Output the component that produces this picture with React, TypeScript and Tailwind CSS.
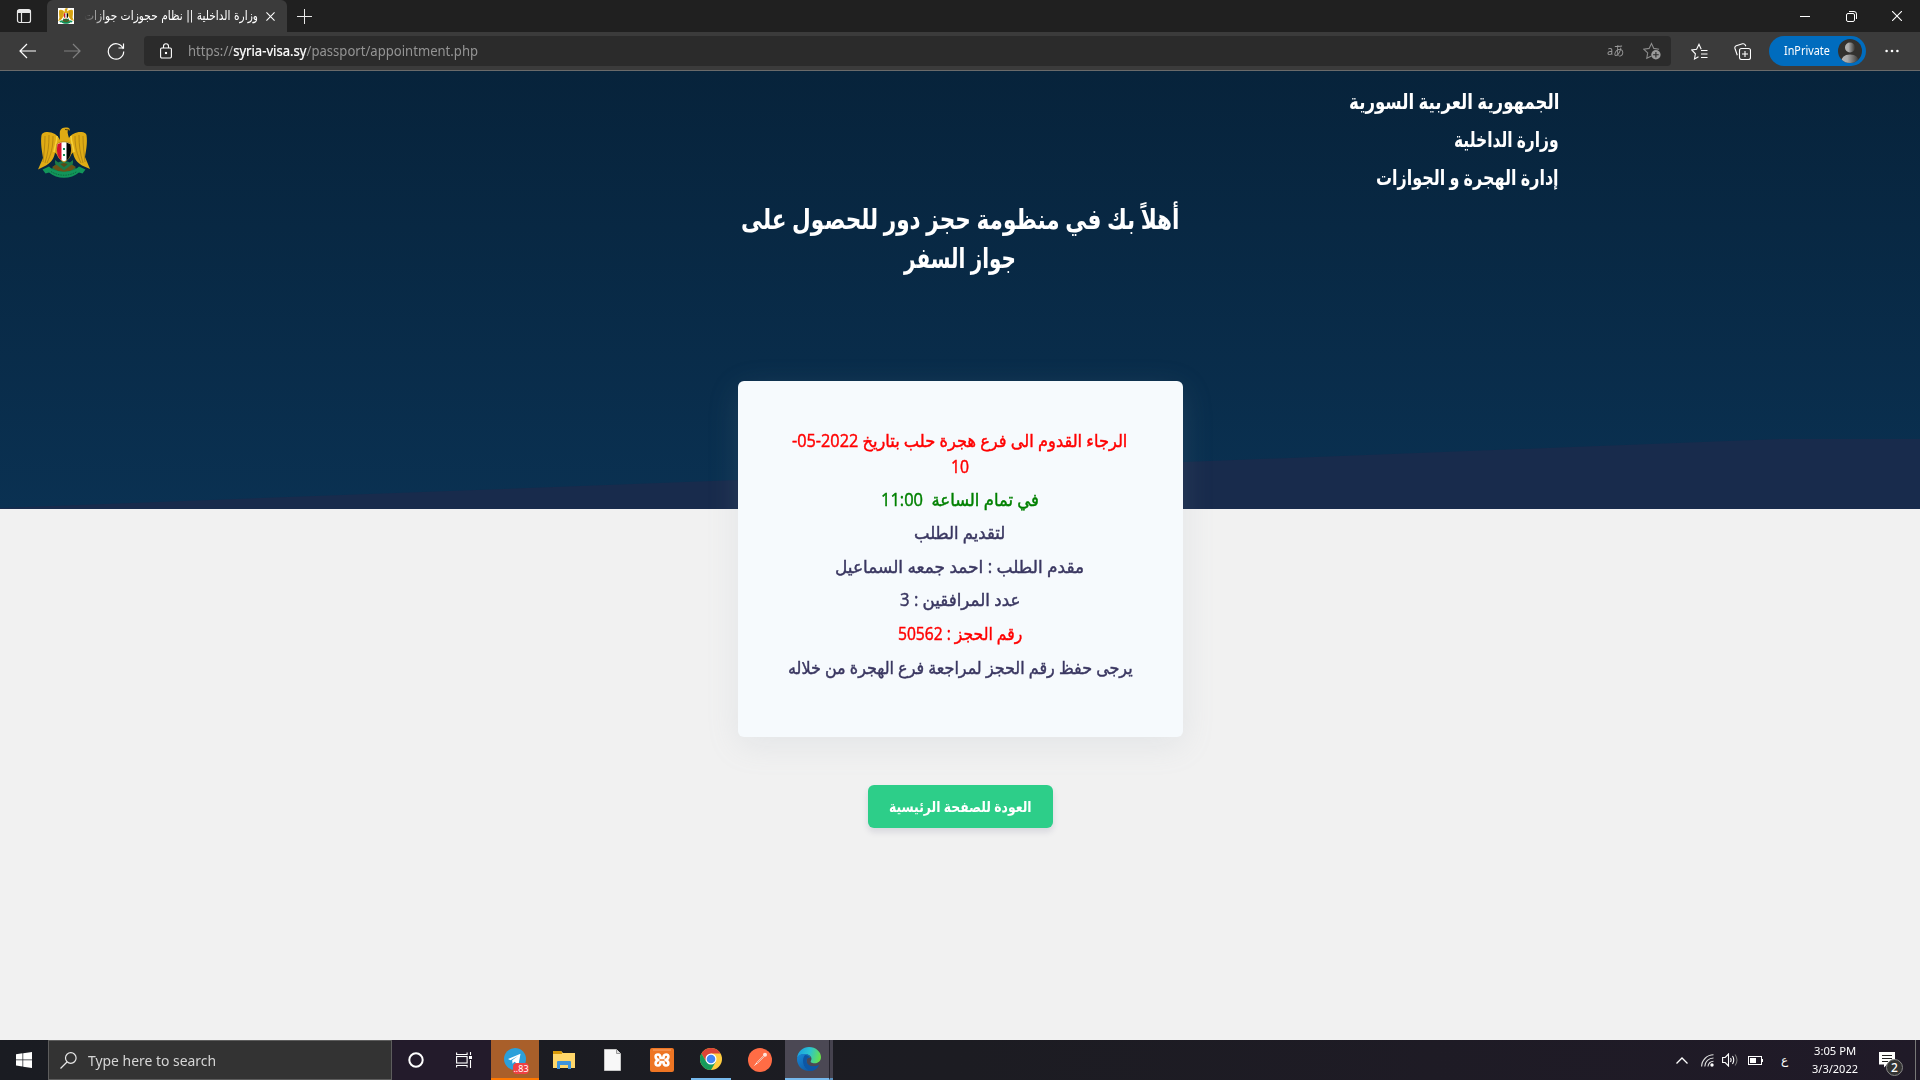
import React, { useLayoutEffect, useRef, useState } from "react";

type FitProps = { w: number; className?: string; rtl?: boolean; children: React.ReactNode };

/* One line of text whose glyphs are stretched horizontally to a fixed width. */
function Fit({ w, className = "", rtl = false, children }: FitProps) {
  const ref = useRef<HTMLSpanElement>(null);
  const [scale, setScale] = useState(1);
  useLayoutEffect(() => {
    const measure = () => {
      if (ref.current && ref.current.offsetWidth) setScale(w / ref.current.offsetWidth);
    };
    measure();
    document.fonts?.ready.then(measure);
  }, [w]);
  return (
    <span
      dir={rtl ? "rtl" : "ltr"}
      className={`flex shrink-0 items-center justify-start whitespace-pre ${className}`}
      style={{ width: w }}
    >
      <span
        ref={ref}
        className={`inline-block shrink-0 ${rtl ? "origin-right" : "origin-left"}`}
        style={{ transform: `scaleX(${scale})` }}
      >
        {children}
      </span>
    </span>
  );
}

function Emblem({ className }: { className: string }) {
  return (
    <svg viewBox="0 0 52 51" className={className}>
      <path d="M14 42c2-4 6-8 12-8s10 4 12 8l-6 4H20z" fill="#1c7a48" />
      <path d="M16 39l10-3 10 3-4 5H20z" fill="#5a4a17" />
      <path d="M22 13c0-4-.5-7 0-9 1-3 4-4 7-3.500 2 .3 3.300 1.200 2.800 3.200l-1.600-.9c-1 1.500-.7 4 .8 8.200 2-4 8-6.500 12.500-6 2.500.3 4.500 1.200 5 3 1.200 8-.5 16-1.500 22l5 12-8-3.500c-5-3-8-7-9-13l-9 10-9-10c-1 6-4 10-9 13L0 42.500 5 31C4 24 2.300 16 3.500 8c.5-1.800 2.500-2.700 5-3 5-.5 11.500 2.500 13.500 8z" fill="#dfab14" />
      <path d="M7 9c0 10-1 16-2 26M11 8c0 11-1 18-4 28M15 9c0 12-2 18-6 27M45 9c0 10 1 16 2 26M41 8c0 11 1 18 4 28M37 9c0 12 2 18 6 27" fill="none" stroke="#a97d10" strokeWidth=".8" />
      <path d="M19 9c0 6-2 9-3 16M33 9c0 6 2 9 3 16" fill="none" stroke="#f7cf38" strokeWidth="1.600" />
      <path d="M27 2.500l4.500.5" stroke="#4a3a08" strokeWidth=".9" />
      <path d="M19 17c4-3 10-3 14 0 1 8 0 15-7 18-7-3-8-10-7-18z" fill="#fff" stroke="#b98a12" />
      <path d="M19.500 17.200l4-1.700v18c-5-4-5-10-4-16.300z" fill="#d3122a" />
      <path d="M32.500 17.200l-4-1.700v18c5-4 5-10 4-16.300z" fill="#050505" />
      <path d="M25 21h2v2h-2zM25 27h2v2h-2z" fill="#138a52" />
      <path d="M14 40l6-3 6 5 6-5 6 3-4 3-8 2-8-2z" fill="#6b5316" />
      <path d="M17 33l9 7 9-7v3.500l-9 7-9-7z" fill="#1c7a48" />
      <path d="M4.500 42.500L11 39.500c7 7 23 7 30 0l6.500 3-3 4-3.500-1c-8 7-22 7-30 0l-3.500 1z" fill="#12955a" />
      <path d="M13 44.500c8 5 18 5 26 0" fill="none" stroke="#0b6b3e" strokeDasharray="1.500 1" />
    </svg>
  );
}

function TitleBar() {
  return (
    <div className="flex h-8 items-stretch bg-[#202020]">
      <div className="flex w-[47px] items-center justify-center">
        <svg viewBox="0 0 16 16" className="h-4 w-4" fill="none" stroke="#e8e8e8" strokeWidth="1.200">
          <rect x="1.500" y="1.500" width="13" height="13" rx="2" />
          <path d="M1.500 3.500h13" strokeWidth="3" />
          <path d="M5.500 5v9" />
        </svg>
      </div>
      <div className="flex w-60 items-center rounded-t-md bg-[#3b3b3b] pl-[11px]">
        <div className="mr-2.5 h-4 w-4 bg-white">
          <Emblem className="h-4 w-4" />
        </div>
        <div className="mb-px [mask-image:linear-gradient(to_right,transparent,black_22px)]">
          <Fit w={174} rtl className="h-6 font-['DejaVu_Sans',sans-serif] text-[13px] text-white">
            وزارة الداخلية || نظام حجوزات جوازات
          </Fit>
        </div>
        <svg viewBox="0 0 10 10" className="ml-2 h-[9px] w-[9px]" stroke="#fff" strokeWidth="1.200">
          <path d="M.5.5l9 9M9.500.5l-9 9" />
        </svg>
      </div>
      <div className="flex flex-1 items-center pl-2.5">
        <svg viewBox="0 0 15 15" className="h-[15px] w-[15px]" stroke="#e8e8e8" strokeWidth="1">
          <path d="M7.500 0v15M0 7.500h15" />
        </svg>
      </div>
      <div className="flex w-[138px] items-center">
        <div className="flex w-[46px] justify-center">
          <svg viewBox="0 0 10 10" className="h-2.5 w-2.5" stroke="#fff"><path d="M0 5.500h10" /></svg>
        </div>
        <div className="flex w-[46px] justify-center">
          <svg viewBox="0 0 11 11" className="h-[11px] w-[11px]" fill="none" stroke="#fff">
            <rect x=".5" y="2.500" width="8" height="8" rx="1.500" />
            <path d="M3 .5h5a2.500 2.500 0 012.500 2.500v5" />
          </svg>
        </div>
        <div className="flex w-[46px] justify-center">
          <svg viewBox="0 0 10 10" className="h-2.5 w-2.5" stroke="#fff" strokeWidth="1.100"><path d="M0 0l10 10M10 0L0 10" /></svg>
        </div>
      </div>
    </div>
  );
}

function Toolbar() {
  return (
    <div className="flex h-[39px] items-center border-b border-[#6a6a6a] bg-[#3b3b3b]">
      <div className="flex w-36 shrink-0 items-center pl-[19px]">
        <svg viewBox="0 0 18 16" className="h-4 w-[18px]" fill="none" stroke="#fff" strokeWidth="1.200"><path d="M17 8H1.500M8 1L1 8l7 7" /></svg>
        <svg viewBox="0 0 18 16" className="ml-[26px] h-4 w-[18px]" fill="none" stroke="#808080" strokeWidth="1.200"><path d="M1 8h15.500M10 1l7 7-7 7" /></svg>
        <svg viewBox="0 0 18 18" className="ml-[26px] h-[18px] w-[18px]" fill="none" stroke="#fff" strokeWidth="1.200"><path d="M16.300 7A7.700 7.700 0 1016.700 9.500M16.500 1.500V6h-5" /></svg>
      </div>
      <div className="flex h-[30px] w-[1527px] shrink-0 items-center rounded bg-[#2b2b2b] pl-4">
        <svg viewBox="0 0 12 16" className="h-4 w-3" fill="none" stroke="#fff" strokeWidth="1.100">
          <rect x=".6" y="5" width="10.800" height="10" rx="1.200" />
          <path d="M3.500 5V3.200a2.500 2.500 0 015 0V5" />
          <rect x="5.500" y="9.500" width="1" height="1" fill="#fff" />
        </svg>
        <Fit w={290} className="ml-4 pt-px font-['Noto_Sans',sans-serif] text-[13.500px] text-[#949494]">
          https://<span className="text-white [-webkit-text-stroke:0.2px_white]">syria-visa.sy</span>/passport/appointment.php
        </Fit>
        <div className="flex-1" />
        <Fit w={17} className="mr-[19px] font-['Noto_Sans','Noto_Sans_CJK_JP',sans-serif] text-[13px] text-[#9a9a9a]">aあ</Fit>
        <svg viewBox="0 0 18 18" className="mr-2.5 h-[18px] w-[18px]" fill="none" stroke="#8c8c8c" strokeWidth="1.100">
          <path d="M8.500 14l-4.700 2.200.9-5.300L.8 7.200l5.300-.8L8.500 1.500l2.300 4.900 5.300.8" />
          <circle cx="12.900" cy="12.800" r="4.700" fill="#9a9a9a" stroke="none" />
          <path d="M12.900 10v5.600M10.100 12.800h5.600" stroke="#2b2b2b" />
        </svg>
      </div>
      <svg viewBox="0 0 17 17" className="ml-5 h-[17px] w-[17px]" fill="none" stroke="#fff" strokeWidth="1.100">
        <path d="M7.500 13.800L3.500 16l.9-5.200L.7 7l4.900-.7L8 1.300l2.200 4.900M10 7.500h6.500M10 11h6.500M10 14.500h6.500" />
      </svg>
      <svg viewBox="0 0 17 17" className="ml-[26px] h-[17px] w-[17px]" fill="none" stroke="#fff" strokeWidth="1.100">
        <rect x="5.500" y="5.500" width="11" height="11" rx="2" />
        <path d="M11 8v6M8 11h6M3.300 12.200L1 5.500Q.4 3.500 2.200 2.700L8.500.8q2-.5 2.800 1.200l.5 1.300" />
      </svg>
      <div className="ml-[18px] flex h-[30px] w-[97px] items-center rounded-full bg-[#006cbe] pl-[15px]">
        <Fit w={46} className="font-['Noto_Sans',sans-serif] text-[12px] text-white">InPrivate</Fit>
        <svg viewBox="0 0 24 24" className="ml-2 h-6 w-6">
          <defs>
            <linearGradient id="person"><stop stopColor="#b5b5b5" /><stop offset=".35" stopColor="#aaa" /><stop offset="1" stopColor="#383633" /></linearGradient>
            <clipPath id="disc"><circle cx="12" cy="12" r="12" /></clipPath>
          </defs>
          <circle cx="12" cy="12" r="12" fill="#33312e" />
          <circle cx="12" cy="8.500" r="5" fill="url(#person)" />
          <path clipPath="url(#disc)" d="M3 24q0-8.500 9-8.500T21 24z" fill="url(#person)" />
        </svg>
      </div>
      <svg viewBox="0 0 14 4" className="ml-[19px] h-1 w-3.5" fill="#fff"><circle cx="1.600" cy="2" r="1.300" /><circle cx="7" cy="2" r="1.300" /><circle cx="12.400" cy="2" r="1.300" /></svg>
    </div>
  );
}

const lines = [
  { t: "في تمام الساعة  11:00", w: 158, c: "text-[#008000]" },
  { t: "لتقديم الطلب", w: 91, c: "text-[#3a3761]" },
  { t: "مقدم الطلب : احمد جمعه السماعيل", w: 249, c: "text-[#3a3761]" },
  { t: "عدد المرافقين : 3", w: 120, c: "text-[#3a3761]" },
  { t: "رقم الحجز : 50562", w: 124, c: "text-[#ff0000]" },
  { t: "يرجى حفظ رقم الحجز لمراجعة فرع الهجرة من خلاله", w: 345, c: "text-[#3a3761]" },
];

const ministry = [
  { t: "الجمهورية العربية السورية", w: 210 },
  { t: "وزارة الداخلية", w: 105 },
  { t: "إدارة الهجرة و الجوازات", w: 183 },
];

function Page() {
  return (
    <main className="h-[969px] bg-[#f1f1f1] font-['Open_Sans','DejaVu_Sans',sans-serif]">
      <section className="relative flex h-[438px] flex-col bg-linear-to-b from-[#07233b] to-[#0a3152]">
        <svg viewBox="0 0 1920 70" preserveAspectRatio="none" className="absolute bottom-0 left-0 h-[70px] w-full">
          <path d="M0 69L738 41L1184 23L1560 8.500L1780 0H1920V70H0z" fill="#182b4c" />
        </svg>
        <div className="flex h-[126px] justify-between pl-[37px] pr-[361px]">
          <Emblem className="mt-14 h-[51px] w-[54px]" />
          <div className="flex flex-col items-end pt-3">
            {ministry.map((m) => (
              <Fit key={m.t} w={m.w} rtl className="h-[38px] text-[21px] font-bold text-white">{m.t}</Fit>
            ))}
          </div>
        </div>
        <h1 className="flex flex-col items-center pt-px text-[28px] font-bold text-white">
          <Fit w={438} rtl className="h-[39px]">أهلاً بك في منظومة حجز دور للحصول على</Fit>
          <Fit w={112} rtl className="h-[39px]">جواز السفر</Fit>
        </h1>
      </section>
      <section className="relative -mt-32 flex flex-col items-center">
        <div className="flex h-[356px] w-[445px] flex-col items-center rounded-md bg-[#f6fafd] pt-[46px] text-[17.500px] font-medium shadow-[0_8px_32px_rgba(146,161,176,0.15)] [-webkit-text-stroke:0.45px_currentColor]">
          <Fit w={335} rtl className="h-[26px] text-[#ff0000]">الرجاء القدوم الى فرع هجرة حلب بتاريخ 2022-05-</Fit>
          <Fit w={18} className="mb-[3px] h-[26px] text-[#ff0000]">10</Fit>
          {lines.map((l) => (
            <Fit key={l.t} w={l.w} rtl className={`h-[33.600px] ${l.c}`}>{l.t}</Fit>
          ))}
        </div>
        <button className="mt-12 flex h-[43px] w-[185px] items-center justify-center rounded-md bg-[#2dce89] pb-px text-[15px] font-bold text-white shadow-[0_4px_6px_rgba(50,50,93,0.13)]">
          <Fit w={143} rtl>العودة للصفحة الرئيسية</Fit>
        </button>
      </section>
    </main>
  );
}

function Taskbar() {
  return (
    <footer className="flex h-10 items-stretch bg-linear-to-r from-[#1a1c22] via-[#1c1c22] to-[#201a28] font-['Noto_Sans',sans-serif]">
      <div className="flex w-12 items-center justify-center">
        <svg viewBox="0 0 16 16" className="h-4 w-4" fill="#fff"><path d="M0 2.200L6.500 1.300v6.200H0zM7.200 1.200L16 0v7.500H7.200zM0 8.300h6.500v6.200L0 13.600zM7.200 8.300H16V16l-8.800-1.200z" /></svg>
      </div>
      <div className="flex w-[344px] items-center border border-[#5d5d5d] bg-[#333] pl-[11px]">
        <svg viewBox="0 0 17 17" className="h-[17px] w-[17px]" fill="none" stroke="#e8e8e8" strokeWidth="1.200"><circle cx="10.800" cy="6" r="5.300" /><path d="M7 10L.5 16.500" /></svg>
        <Fit w={128} className="ml-[11px] pt-px text-[15px] text-[#d6d6d6]">Type here to search</Fit>
      </div>
      <div className="flex w-[99px] items-center bg-[#231b2b] pl-4">
        <svg viewBox="0 0 16 16" className="h-4 w-4" fill="none" stroke="#fff" strokeWidth="2"><circle cx="8" cy="8" r="6.700" /></svg>
        <svg viewBox="0 0 17 16" className="ml-8 h-4 w-[17px]" fill="none" stroke="#fff" strokeWidth="1.100">
          <rect x=".6" y="4.500" width="10.500" height="6.500" />
          <path d="M.6.500v2h10.500v-2M.6 15.500v-2h10.500v2M14.500 0v3M14.500 8v8" />
          <path d="M13 4h3v3h-3z" fill="#fff" stroke="none" />
        </svg>
      </div>
      <div className="relative flex w-12 items-center justify-center border-b-2 border-[#ff7800] bg-[#a95f2a]">
        <svg viewBox="0 0 22 22" className="h-[22px] w-[22px]"><circle cx="11" cy="11" r="11" fill="#2ba0da" /><path d="M4 11l12.500-5.200-2 11-4-3-2 2-.3-3.500L14 8l-7.500 4.200z" fill="#fff" /></svg>
        <span className="absolute bottom-1 left-[22px] flex h-[11px] w-4 items-center justify-center rounded-sm bg-[#ef4144] text-[9px] leading-none text-white">..83</span>
      </div>
      <div className="flex items-center pl-3.5">
        <svg viewBox="0 0 22 18" className="h-[18px] w-[22px]">
          <path d="M0 0h8l2 2h12v15H0z" fill="#ffd76a" /><path d="M0 0h8l1 1.500V3H0z" fill="#d99a08" />
          <path d="M4 18v-7q0-1 1-1h12q1 0 1 1v7h-3v-4H7v4z" fill="#3f95dc" />
        </svg>
        <svg viewBox="0 0 17 22" className="ml-[29px] h-[22px] w-[17px]"><path d="M.5.500h12l4 4v17H.5z" fill="#f8f8f8" stroke="#c7c7c7" /><path d="M12.500.5v4h4" fill="#ddd" stroke="#999" /></svg>
        <svg viewBox="0 0 24 24" className="ml-[29px] h-6 w-6">
          <rect width="24" height="24" rx="2" fill="#ee7523" /><path d="M3 2h18" stroke="#f9a870" />
          <path d="M8.500 12C5 11 4.500 6.500 8 6.500c2 0 2.500 1.500 2.500 3.500h3c0-2 .5-3.500 2.500-3.500 3.500 0 3 4.500-.5 5.500 3.500 1 4 5.500.5 5.500-2 0-2.500-1.500-2.500-3.500h-3c0 2-.5 3.500-2.500 3.500-3.500 0-3-4.500.5-5.500z" fill="none" stroke="#fff" strokeWidth="2.600" strokeLinejoin="round" />
        </svg>
      </div>
      <div className="ml-[17px] flex w-10 items-center justify-center border-b-2 border-[#76b9ed]">
        <svg viewBox="0 0 22 22" className="h-[22px] w-[22px]">
          <circle cx="11" cy="11" r="11" fill="#ffcd40" />
          <path d="M1.470 5.500A11 11 0 0120.530 5.500H11L6.200 13.700z" fill="#dc4437" />
          <path d="M1.470 5.500A11 11 0 0011 22l4.800-8.200H6.200z" fill="#169b5b" />
          <circle cx="11" cy="11" r="5.500" fill="#fff" /><circle cx="11" cy="11" r="4.300" fill="#4285f4" />
        </svg>
      </div>
      <div className="flex w-[54px] items-center pl-[17px]">
        <svg viewBox="0 0 24 24" className="h-6 w-6 shrink-0">
          <circle cx="12" cy="12" r="12" fill="#ff6c45" />
          <path d="M5.500 18.500l3.500-4.500L15.500 7.500l1 1-6.500 6.500z" fill="#fff" /><circle cx="17" cy="6.700" r="2" fill="#ffe4dc" /><path d="M9 15l7-7" stroke="#d94f2c" strokeWidth=".6" />
        </svg>
      </div>
      <div className="flex w-11 items-center justify-center border-b-2 border-[#76b9ed] bg-[#4b4854] pl-1">
        <svg viewBox="0 0 24 24" className="h-6 w-6">
          <defs>
            <linearGradient id="edgeTop" x1="0" x2="1" y1=".3" y2=".5"><stop stopColor="#199fe0" /><stop offset=".5" stopColor="#2bc3d2" /><stop offset="1" stopColor="#67e24b" /></linearGradient>
            <linearGradient id="edgeLow" x1="0" x2="1" y1="0" y2="1"><stop stopColor="#1787d6" /><stop offset="1" stopColor="#0c4b93" /></linearGradient>
          </defs>
          <path d="M0 11C1 4 6 0 12 0c7 0 12 5 12 10 0 4-3 6.300-6.500 6.300-3 0-4.500-1.300-3.500-2.600C16 10 12 7 8 7c-4 0-7 2-8 4z" fill="url(#edgeTop)" />
          <path d="M0 12C0 8.500 4 6.500 8 7c3 0 5.500 1.800 5.500 4-1-1-4-.500-4 3 0 4 5 7.500 12.500 4-2 4-6 6-10 6C5 24 0 18.500 0 12z" fill="url(#edgeLow)" />
          <path d="M8 8c-3 3-3.500 13 5.500 16 4 0 7-3 8.500-6-7 3.500-12.500 0-12.500-4 0-2 1-3.300 3-3.500C12 9 10 8 8 8z" fill="#0d56a4" />
        </svg>
      </div>
      <div className="w-1 border-b-2 border-l border-b-[#5a92c0] border-l-[#24222c] bg-[#45424e]" />
      <div className="flex-1" />
      <div className="flex items-center">
        <svg viewBox="0 0 12 7" className="h-[7px] w-3" fill="none" stroke="#fff" strokeWidth="1.300"><path d="M.5 6.500L6 1l5.500 5.500" /></svg>
        <svg viewBox="0 0 13 13" className="ml-[13px] h-[13px] w-[13px]" fill="none" stroke="#e0e0e0" strokeWidth="1.100"><path d="M.6 12.500A12 12 0 0112.500.8M3.800 12.500a8.700 8.700 0 018.700-8.500M7 12.500a5.500 5.500 0 015.500-5.300" /><circle cx="11" cy="11" r="1.700" fill="#fff" stroke="none" /></svg>
        <svg viewBox="0 0 17 14" className="ml-2 h-3.5 w-[17px]" fill="none" stroke="#fff" strokeWidth="1.100"><path d="M.6 4.500h2.600L6.500 1v12L3.200 9.500H.6zM8.500 5q1.200 2 0 4M10.500 3q2.500 4 0 8" /><path d="M13 1.500q4 5.500 0 11" stroke="#777" /></svg>
        <svg viewBox="0 0 15 9" className="ml-[9px] h-[9px] w-[15px]"><rect x=".5" y=".5" width="13" height="8" fill="none" stroke="#fff" /><path d="M2 2h6v5H2zM14 3h1v3h-1z" fill="#fff" /></svg>
        <span className="ml-[18px] w-[7px] font-['DejaVu_Sans',sans-serif] text-[12px] text-white">ع</span>
        <div className="ml-6 flex flex-col items-center text-[11.500px] leading-[18px] text-white">
          <Fit w={42}>3:05 PM</Fit>
          <Fit w={46}>3/3/2022</Fit>
        </div>
        <div className="relative ml-[21px] h-6 w-6">
          <svg viewBox="0 0 16 16" className="mt-1 h-4 w-4"><path d="M0 0h16v12.500H8L5 15.500v-3H0z" fill="#fff" /><path d="M3 3.500h10M3 6.500h10M3 9.500h6" stroke="#222" /></svg>
          <span className="absolute left-[7px] top-[11px] flex h-[17px] w-[17px] items-center justify-center rounded-full border border-[#888] bg-[#333] text-[12px] font-medium leading-none text-white">2</span>
        </div>
        <div className="ml-3 h-10 w-[5px] border-l border-[#777]" />
      </div>
    </footer>
  );
}

export default function App() {
  return (
    <div className="flex h-[1080px] w-[1920px] flex-col overflow-hidden">
      <TitleBar />
      <Toolbar />
      <Page />
      <Taskbar />
    </div>
  );
}
